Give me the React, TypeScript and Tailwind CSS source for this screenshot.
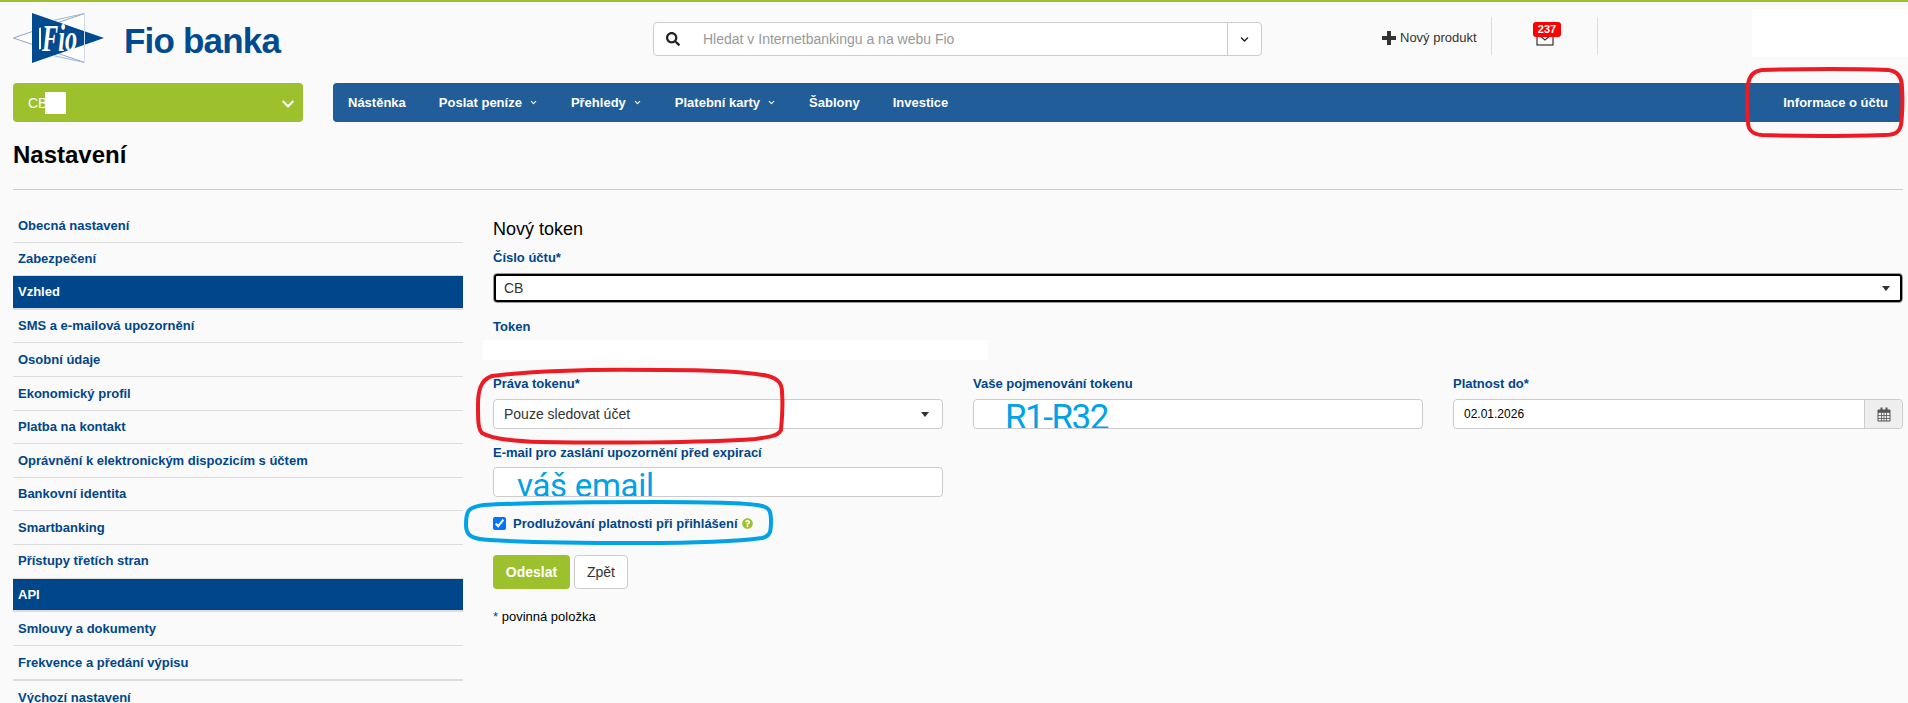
import { ChevronDown } from "lucide-react";
import { FaChevronDown, FaQuestionCircle, FaSearch } from "react-icons/fa";

const navItems = [
  { label: "Nástěnka", caret: false },
  { label: "Poslat peníze", caret: true },
  { label: "Přehledy", caret: true },
  { label: "Platební karty", caret: true },
  { label: "Šablony", caret: false },
  { label: "Investice", caret: false },
];

const sideItems = [
  { label: "Obecná nastavení" },
  { label: "Zabezpečení" },
  { label: "Vzhled", active: true },
  { label: "SMS a e-mailová upozornění" },
  { label: "Osobní údaje" },
  { label: "Ekonomický profil" },
  { label: "Platba na kontakt" },
  { label: "Oprávnění k elektronickým dispozicím s účtem" },
  { label: "Bankovní identita" },
  { label: "Smartbanking" },
  { label: "Přístupy třetích stran" },
  { label: "API", active: true },
  { label: "Smlouvy a dokumenty" },
  { label: "Frekvence a předání výpisu", thick: true },
  { label: "Výchozí nastavení" },
];

const Caret = () => (
  <svg width="8" height="5" viewBox="0 0 8 5" className="shrink-0">
    <polygon points="0,0 8,0 4,5" fill="#333" />
  </svg>
);

const Logo = () => (
  <svg width="91" height="50" viewBox="0 0 91 50" className="shrink-0">
    <polygon points="0.5,25 71.5,0.5 71.5,49.5" fill="#fff" stroke="#8aa6c6" strokeWidth="1" />
    <polygon points="19,0 91,25 19,50" fill="#004a8f" />
    <line x1="40" y1="7.5" x2="71.5" y2="0.5" stroke="#9fb8d4" strokeWidth="1" />
    <line x1="40" y1="42.5" x2="71.5" y2="49.5" stroke="#9fb8d4" strokeWidth="1" />
    <line x1="71.5" y1="0" x2="71.5" y2="50" stroke="#cfdbe9" strokeWidth="1" />
    <polygon points="26,15 28,14.5 28,36 26,36.5" fill="#fff" />
    <text
      x="29"
      y="38"
      fill="#fff"
      fontFamily="'Liberation Serif', serif"
      fontStyle="italic"
      fontWeight="700"
      fontSize="37"
      textLength="35"
      lengthAdjust="spacingAndGlyphs"
    >
      Fio
    </text>
  </svg>
);

const Label = ({ children }: { children: React.ReactNode }) => (
  <div className="h-[18px] text-[13px] leading-[20px] font-bold text-[#00468a]">{children}</div>
);

export default function App() {
  return (
    <div className="relative h-[703px] w-full overflow-hidden border-t-2 border-[#9dc12c] bg-[#fafafa] font-['Liberation_Sans',Arial,sans-serif] text-[13px] text-[#333]">
      {/* Header */}
      <header className="flex h-[81px] items-start pl-[13px]">
        <div className="mt-[11px]">
          <Logo />
        </div>
        <div className="mt-[19px] ml-[20px] w-[157px] text-[35px] leading-[40px] font-bold tracking-[-0.8px] whitespace-nowrap text-[#004a8f]">
          Fio banka
        </div>
        <div className="mt-[20px] ml-[372px] flex h-[34px] w-[609px] items-center rounded border border-[#ccc] bg-white">
          <FaSearch className="ml-[12px] size-[14px] text-[#222]" />
          <span className="ml-[23px] flex-1 text-sm text-[#999]">Hledat v Internetbankingu a na webu Fio</span>
          <div className="flex h-full w-[34px] items-center justify-center border-l border-[#ccc]">
            <FaChevronDown className="size-[9px] text-[#222]" />
          </div>
        </div>
        <div className="mt-[27px] ml-[120px] flex h-[18px] w-[109px] items-center">
          <svg width="14" height="14" viewBox="0 0 14 14" className="shrink-0">
            <path d="M5 0h4v5h5v4H9v5H5V9H0V5h5z" fill="#333" />
          </svg>
          <span className="ml-[4px] whitespace-nowrap">Nový produkt</span>
        </div>
        <div className="relative mt-[15px] flex h-[38px] w-[107px] justify-center border-x border-[#ddd]">
          <svg width="18" height="16" viewBox="0 0 18 16" className="absolute top-[13px] left-[44px]">
            <rect x="1" y="1" width="16" height="14" fill="none" stroke="#333" strokeWidth="1.2" />
            <polyline points="3,5 9,10 15,5" fill="none" stroke="#333" strokeWidth="1.2" />
          </svg>
          <span className="absolute top-[5px] left-[41px] flex h-[15px] w-[28px] items-center justify-center rounded-[3px] bg-[#f00] text-[11px] font-bold text-white">
            237
          </span>
        </div>
        <div className="mt-[7px] ml-auto h-[48px] w-[156px] bg-white" />
      </header>

      {/* Account picker and menu */}
      <div className="flex h-[39px] gap-[30px] pr-[5px] pl-[13px]">
        <div className="flex w-[290px] items-center rounded bg-[#9dc12c] pr-[8px] pl-[15px] text-sm text-white">
          <span>CB</span>
          <span className="-ml-[2px] h-[22px] w-[21px] bg-white" />
          <FaChevronDown className="mt-[3px] ml-auto size-[14px]" />
        </div>
        <nav className="flex flex-1 items-center gap-[33px] rounded bg-[#215d98] px-[15px] font-bold text-white">
          {navItems.map((item) => (
            <span key={item.label} className="flex items-center gap-[7px] whitespace-nowrap">
              {item.label}
              {item.caret && <ChevronDown className="size-[9px]" strokeWidth={3} />}
            </span>
          ))}
          <span className="ml-auto whitespace-nowrap">Informace o účtu</span>
        </nav>
      </div>

      <h1 className="mt-[19px] ml-[13px] text-2xl leading-[28px] font-bold text-black">Nastavení</h1>
      <hr className="mt-[20px] mr-[5px] ml-[13px] border-t border-[#ccc]" />

      {/* Main */}
      <div className="mt-[19px] flex gap-[30px] pr-[5px] pl-[13px]">
        <aside className="w-[450px] shrink-0">
          {sideItems.map((item) => (
            <div
              key={item.label}
              className={`flex items-center pl-[5px] text-[13px] font-bold ${item.thick ? "h-[35.6px]" : "h-[33.6px]"} ${item.active ? "border-b-2 border-[#ddd] bg-[#00468a] text-white" : "border-b border-[#ddd] text-[#00468a]"} ${item.thick ? "border-b-2" : ""}`}
            >
              {item.label}
            </div>
          ))}
        </aside>

        <section className="min-w-0 flex-1 pt-[9px]">
          <h2 className="h-[20px] text-lg leading-[22px] text-black">Nový token</h2>
          <div className="mt-[10px]">
            <Label>Číslo účtu*</Label>
          </div>
          <div className="mt-[7px] rounded-[4px] border border-[#999] bg-white">
            <div className="flex h-[28px] items-center justify-between rounded-[3px] border-[2.5px] border-black pr-[10px] pl-[8px] text-sm">
              <span>CB</span>
              <Caret />
            </div>
          </div>
          <div className="mt-[14px]">
            <Label>Token</Label>
          </div>
          <div className="mt-[5px] -ml-[10px] h-[20px] w-[505px] bg-white" />

          <div className="mt-[14px] grid grid-cols-3 gap-x-[30px]">
            <div>
              <Label>Práva tokenu*</Label>
              <div className="mt-[7px] flex h-[30px] items-center justify-between rounded border border-[#ccc] bg-white pr-[13px] pl-[10px] text-sm">
                <span>Pouze sledovat účet</span>
                <Caret />
              </div>
            </div>
            <div>
              <Label>Vaše pojmenování tokenu</Label>
              <div className="mt-[7px] h-[30px] overflow-hidden rounded border border-[#ccc] bg-white pl-[31px] font-['Roboto',sans-serif] text-[35px] leading-[35px] tracking-[-1.5px] text-[#00a2e8]">
                R1-R32
              </div>
            </div>
            <div>
              <Label>Platnost do*</Label>
              <div className="mt-[7px] flex h-[30px] rounded border border-[#ccc] bg-white text-xs text-black">
                <span className="flex flex-1 items-center pl-[10px]">02.01.2026</span>
                <span className="flex w-[38px] items-center justify-center rounded-r border-l border-[#ccc] bg-[#eee]">
                  <svg width="14" height="15" viewBox="0 0 14 15">
                    <path d="M1 3h12v11H1z" fill="none" stroke="#555" />
                    <path d="M1 5.5h12M1 8.5h12M1 11.5h12M4.5 5v9M7 5v9M9.5 5v9" stroke="#555" strokeWidth="0.8" />
                    <path d="M3.5 0.5h2v3.5h-2zM8.5 0.5h2v3.5h-2z" fill="#555" />
                    <path d="M1 3h12v2H1z" fill="#555" />
                  </svg>
                </span>
              </div>
            </div>
          </div>

          <div className="mt-[14px] w-[450px]">
            <Label>E-mail pro zaslání upozornění před expirací</Label>
            <div className="mt-[6px] h-[30px] overflow-hidden rounded border border-[#ccc] bg-white pl-[23px] font-['Roboto',sans-serif] text-[33px] leading-[36px] tracking-[-0.3px] text-[#00a2e8]">
              váš email
            </div>
          </div>

          <label className="mt-[20px] flex h-[13px] items-center text-[13px] font-bold text-[#00468a]">
            <input type="checkbox" defaultChecked className="m-0 size-[13px]" />
            <span className="ml-[7px]">Prodlužování platnosti při přihlášení</span>
            <FaQuestionCircle className="ml-[4px] size-[11px] text-[#9dc12c]" />
          </label>

          <div className="mt-[25px] flex gap-[4px]">
            <button className="h-[34px] w-[77px] rounded bg-[#9dc12c] text-sm font-bold text-white">Odeslat</button>
            <button className="h-[34px] w-[54px] rounded border border-[#ccc] bg-white text-sm text-[#333]">Zpět</button>
          </div>

          <p className="mt-[19px] text-[13px] leading-[18px] text-black">
            <span className="text-[#00468a]">*</span> povinná položka
          </p>
        </section>
      </div>

      {/* Hand-drawn annotations over the screenshot */}
      <svg className="pointer-events-none absolute -top-[2px] left-0" width="1908" height="703" fill="none" strokeWidth="4">
        <path
          d="M1762 70C1800 69 1860 69 1888 70C1898 71 1902 78 1902 88C1903 100 1902 118 1901 125C1899 133 1894 135 1885 135C1850 136 1790 136 1762 135C1752 134 1748 130 1748 122C1747 110 1747 95 1748 85C1749 75 1754 71 1762 70Z"
          stroke="#ed1c24"
        />
        <path
          d="M492 376C540 370 600 369 660 370C700 370 745 371 768 376C778 379 782 383 782 392C783 405 782 420 781 430C778 436 770 437 755 439C700 443 600 443 540 442C510 441 490 438 482 433C478 429 478 420 478 405C478 392 480 380 492 376Z"
          stroke="#ed1c24"
        />
        <path
          d="M484 505C520 503 600 502 660 502C710 502 750 503 762 506C770 508 771 512 771 522C771 532 770 536 762 538C740 541 690 543 640 543C580 543 520 542 490 540C472 539 466 536 466 525C466 512 467 507 484 505Z"
          stroke="#00a2e8"
        />
      </svg>
    </div>
  );
}
